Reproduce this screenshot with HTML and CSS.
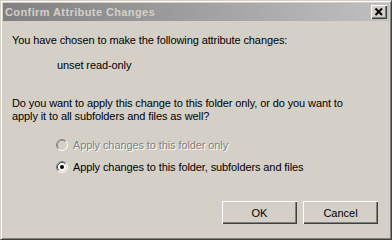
FILE: index.html
```html
<!DOCTYPE html>
<html>
<head>
    <title>Confirm Attribute Changes</title>
    <link rel="stylesheet" href="styles.css">
</head>
<body>
    <div class="window">
        <div class="titlebar">
            <span class="title">Confirm Attribute Changes</span>
            <span class="close-btn">
                <svg width="16" height="14" viewBox="0 0 16 14">
                    <path d="M4.5 3.5 L11 10 M11 3.5 L4.5 10" stroke="#000" stroke-width="2" fill="none"/>
                </svg>
            </span>
        </div>
        <div class="content">
            <p class="line">You have chosen to make the following attribute changes:</p>
            <p class="line indent change">unset read-only</p>
            <p class="line question">Do you want to apply this change to this folder only, or do you want to<br>apply it to all subfolders and files as well?</p>

            <div class="radio disabled first">
                <svg width="12" height="12" viewBox="0 0 12 12">
                    <circle cx="6" cy="6" r="5" fill="#d4d0c8"/>
                    <path d="M2.11 9.89 A5.5 5.5 0 0 1 9.89 2.11" stroke="#808080" fill="none"/>
                    <path d="M9.89 2.11 A5.5 5.5 0 0 1 2.11 9.89" stroke="#fff" fill="none"/>
                    <path d="M2.82 9.18 A4.5 4.5 0 0 1 9.18 2.82" stroke="#404040" fill="none" opacity="0.35"/>
                </svg>
                <span>Apply changes to this folder only</span>
            </div>
            <div class="radio">
                <svg width="12" height="12" viewBox="0 0 12 12">
                    <circle cx="6" cy="6" r="5" fill="#fff"/>
                    <path d="M2.11 9.89 A5.5 5.5 0 0 1 9.89 2.11" stroke="#808080" fill="none"/>
                    <path d="M9.89 2.11 A5.5 5.5 0 0 1 2.11 9.89" stroke="#fff" fill="none"/>
                    <path d="M2.82 9.18 A4.5 4.5 0 0 1 9.18 2.82" stroke="#404040" fill="none"/>
                    <path d="M9.18 2.82 A4.5 4.5 0 0 1 2.82 9.18" stroke="#d4d0c8" fill="none"/>
                    <circle cx="6" cy="6" r="2" fill="#000"/>
                </svg>
                <span>Apply changes to this folder, subfolders and files</span>
            </div>

            <div class="buttons">
                <button class="btn">OK</button>
                <button class="btn">Cancel</button>
            </div>
        </div>
    </div>
</body>
</html>
```

FILE: styles.css
```css
body {
    margin: 0;
    padding: 0;
    background-color: #d4d0c8;
    font-family: "Liberation Sans", Arial, sans-serif;
    font-size: 11px;
    color: #000;
}

.window {
    width: 392px;
    height: 240px;
    box-sizing: border-box;
    padding: 1px;
    background-color: #d4d0c8;
    border-top: 1px solid #d4d0c8;
    border-left: 1px solid #d4d0c8;
    border-right: 1px solid #404040;
    border-bottom: 1px solid #404040;
    box-shadow: inset 1px 1px 0 #fff, inset -1px -1px 0 #808080;
    display: flex;
    flex-direction: column;
}

/* inactive caption */
.titlebar {
    height: 18px;
    margin: 1px 0 0 1px;
    width: 386px;
    display: flex;
    align-items: center;
    justify-content: space-between;
    background: linear-gradient(to right, #808080, #c0c0c0);
}

.title {
    color: #d4d0c8;
    font-weight: bold;
    font-size: 11px;
    padding-left: 2px;
    letter-spacing: 0.4px;
}

.close-btn {
    width: 16px;
    height: 14px;
    margin-right: 2px;
    background-color: #d4d0c8;
    box-shadow: inset 1px 1px 0 #fff, inset -1px -1px 0 #404040, inset -2px -2px 0 #808080;
    display: flex;
}

.content {
    flex: 1;
    display: flex;
    flex-direction: column;
    padding: 13px 10px 0 10px;
    letter-spacing: -0.1px;
}

.line {
    margin: 0;
    line-height: 13px;
    white-space: nowrap;
}

.indent {
    padding-left: 45px;
}

.change {
    margin-top: 12px;
}

.question {
    margin-top: 25px;
}

.radio {
    display: flex;
    align-items: center;
    height: 13px;
    padding-left: 44px;
    margin-top: 9px;
}

.radio.first {
    margin-top: 15px;
}

.radio svg {
    margin-right: 5px;
}

.radio.disabled span {
    color: #808080;
    text-shadow: 1px 1px 0 #fff;
}

.buttons {
    display: flex;
    justify-content: flex-end;
    gap: 6px;
    margin-top: 28px;
    padding-right: 2px;
}

.btn {
    width: 75px;
    height: 23px;
    padding: 0;
    border: none;
    background-color: #d4d0c8;
    font-family: "Liberation Sans", Arial, sans-serif;
    font-size: 11px;
    color: #000;
    box-shadow: inset 1px 1px 0 #fff, inset -1px -1px 0 #404040, inset -2px -2px 0 #808080;
}
```
